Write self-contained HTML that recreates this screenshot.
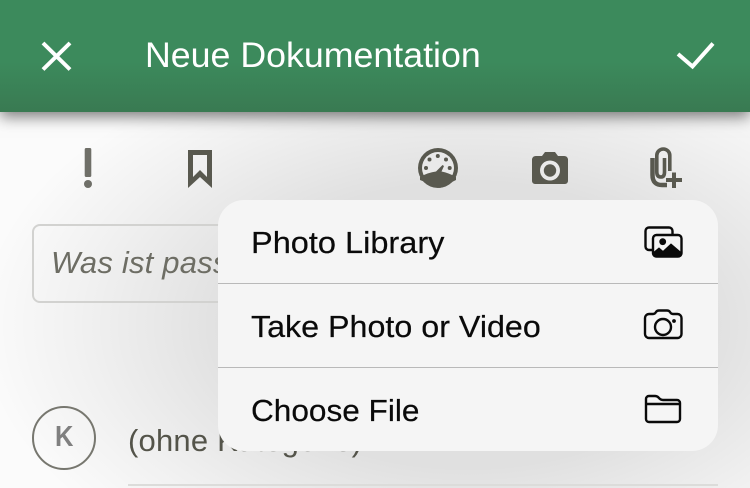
<!DOCTYPE html>
<html><head><meta charset="utf-8">
<style>
html,body{margin:0;padding:0;background:#fbfbfb}
#r{position:relative;width:750px;height:488px;overflow:hidden;background:radial-gradient(ellipse 490px 290px at 468px 325px,rgba(0,0,0,.105) 50%,rgba(0,0,0,.08) 62%,rgba(0,0,0,.04) 80%,rgba(0,0,0,0) 100%),#fbfbfb;font-family:"Liberation Sans",sans-serif}
.t{position:absolute;white-space:nowrap;line-height:1;transform-origin:0 50%}
svg{position:absolute;left:0;top:0}
#hdr{position:absolute;left:0;top:0;width:750px;height:112px;background:linear-gradient(#3c8a5c 0,#3c8a5c 55%,#397a52 100%);box-shadow:0 5px 14px rgba(0,0,0,.5)}
#inp{position:absolute;left:32px;top:224px;width:300px;height:75px;border:2px solid #d2d2d0;border-radius:8px}
#pop{position:absolute;left:218px;top:200px;width:500px;height:251px;background:#f5f5f5;border-radius:26px}
#pop .t{-webkit-text-stroke:.2px #0a0a0a}
.sep{position:absolute;left:0;width:500px;height:1px;background:#b9b9b9}
#circ{position:absolute;left:32px;top:406px;width:60px;height:60px;border:2px solid #77776f;border-radius:50%}
#line{position:absolute;left:128px;top:484px;width:590px;height:2px;background:#dcdcda}
</style></head><body><div id="r">
<div id="inp"></div>
<div class="t" style="left:51px;top:247px;font-size:31px;font-style:italic;color:#6d6d64;letter-spacing:.2px">Was ist passiert?</div>
<div id="circ"></div>
<div class="t" style="left:55px;top:423px;font-size:29px;font-weight:bold;color:#808080;transform:scaleX(.88)">K</div>
<div class="t" style="left:128px;top:425px;font-size:31px;color:#54544a;letter-spacing:.2px">(ohne Kategorie)</div>
<div id="line"></div>

<svg width="750" height="488" viewBox="0 0 750 488">
<rect x="84.700" y="148" width="6.600" height="29" rx="1.500" fill="#6f6f68"/>
<circle cx="88" cy="184" r="4" fill="#6f6f68"/>
<path fill-rule="evenodd" d="M188 150H212V188L200 177L188 188ZM193 155V177L200 170L207 177V155Z" fill="#59594f"/>
<circle cx="438" cy="168" r="20" fill="#59594f"/>
<circle cx="438" cy="168" r="16" fill="#e9e9e9"/>
<g fill="#59594f">
<circle cx="426" cy="168" r="2"/><circle cx="429.500" cy="159.500" r="2"/><circle cx="437.800" cy="156" r="2"/><circle cx="446" cy="159.500" r="2"/><circle cx="449.700" cy="168" r="2"/>
<path d="M420 177Q428 172.500 436 171.500L442.500 165L444 166L441.500 171.500Q449 173 456 177V180L440 188L420 180Z"/>
</g>
<path d="M532 159a4 4 0 0 1 4-3h6l3-4h10l3 4h6a4 4 0 0 1 4 3v22a3 3 0 0 1-3 3h-30a3 3 0 0 1-3-3Z" fill="#59594f"/>
<circle cx="550" cy="170.500" r="10" fill="#e9e9e9"/><circle cx="550" cy="170.500" r="6.200" fill="#59594f"/>
<path d="M652.500 158V175Q652.500 185 662 185H667" fill="none" stroke="#59594f" stroke-width="4.500"/>
<path d="M669.800 171V155.500a6.500 6.500 0 0 0-13 0V172Q656.800 177 661 177Q664.500 177 664.500 172V158" fill="none" stroke="#59594f" stroke-width="3.600"/>
<path d="M666 180H682M674 172.500V188" fill="none" stroke="#59594f" stroke-width="4"/>
</svg>

<div id="hdr"></div>
<div class="t" style="left:145px;top:38px;font-size:35px;color:#fff;transform:scaleX(1.021)">Neue Dokumentation</div>
<svg width="750" height="112" viewBox="0 0 750 112">
<path d="M43 43L70 69.500M70 43L43 69.500" stroke="#fff" stroke-width="4" fill="none"/>
<path d="M678 54L692.500 66.500L713 43.500" stroke="#fff" stroke-width="4" fill="none"/>
</svg>

<div id="pop">
<div class="t" style="left:33px;top:27px;font-size:31px;color:#0a0a0a;transform:scaleX(1.049)">Photo Library</div>
<div class="sep" style="top:83px"></div>
<div class="t" style="left:33px;top:111px;font-size:31px;color:#0a0a0a;transform:scaleX(1.04)">Take Photo or Video</div>
<div class="sep" style="top:167px"></div>
<div class="t" style="left:33px;top:195px;font-size:31px;color:#0a0a0a;transform:scaleX(1.018)">Choose File</div>
</div>

<svg width="750" height="488" viewBox="0 0 750 488">
<g fill="none" stroke="#0a0a0a" stroke-width="2.400">
<path d="M652 250H649a3.500 3.500 0 0 1-3.500-3.500V231a3.500 3.500 0 0 1 3.500-3.500H669a3.500 3.500 0 0 1 3.500 3.500V234"/>
<rect x="653" y="235" width="28.500" height="21.500" rx="3.500"/>
<circle cx="662.700" cy="241.700" r="3.400" fill="#0a0a0a" stroke="none"/>
<path d="M653 253L659 248L663 251.500L671 244L681.500 253V254.500Q681.500 256.500 679 256.500H655.500Q653 256.500 653 254.500Z" fill="#0a0a0a" stroke-width="1"/>
<path d="M649 314H653Q655 314 656 312Q657 310.500 659 310.500H667Q669 310.500 670 312Q671 314 673 314H677.500a4 4 0 0 1 4 4V334a4 4 0 0 1-4 4H649a4 4 0 0 1-4-4V318a4 4 0 0 1 4-4Z"/>
<circle cx="663" cy="327" r="8"/>
<circle cx="674" cy="321" r="1.900" fill="#0a0a0a" stroke="none"/>
<path d="M646 419V399a3 3 0 0 1 3-3H655Q657 396 658.500 397.500Q660.500 400 663 400H677a3 3 0 0 1 3 3V419a3 3 0 0 1-3 3H649a3 3 0 0 1-3-3Z"/>
<path d="M646 404H680"/>
</g>
</svg>
</div></body></html>
